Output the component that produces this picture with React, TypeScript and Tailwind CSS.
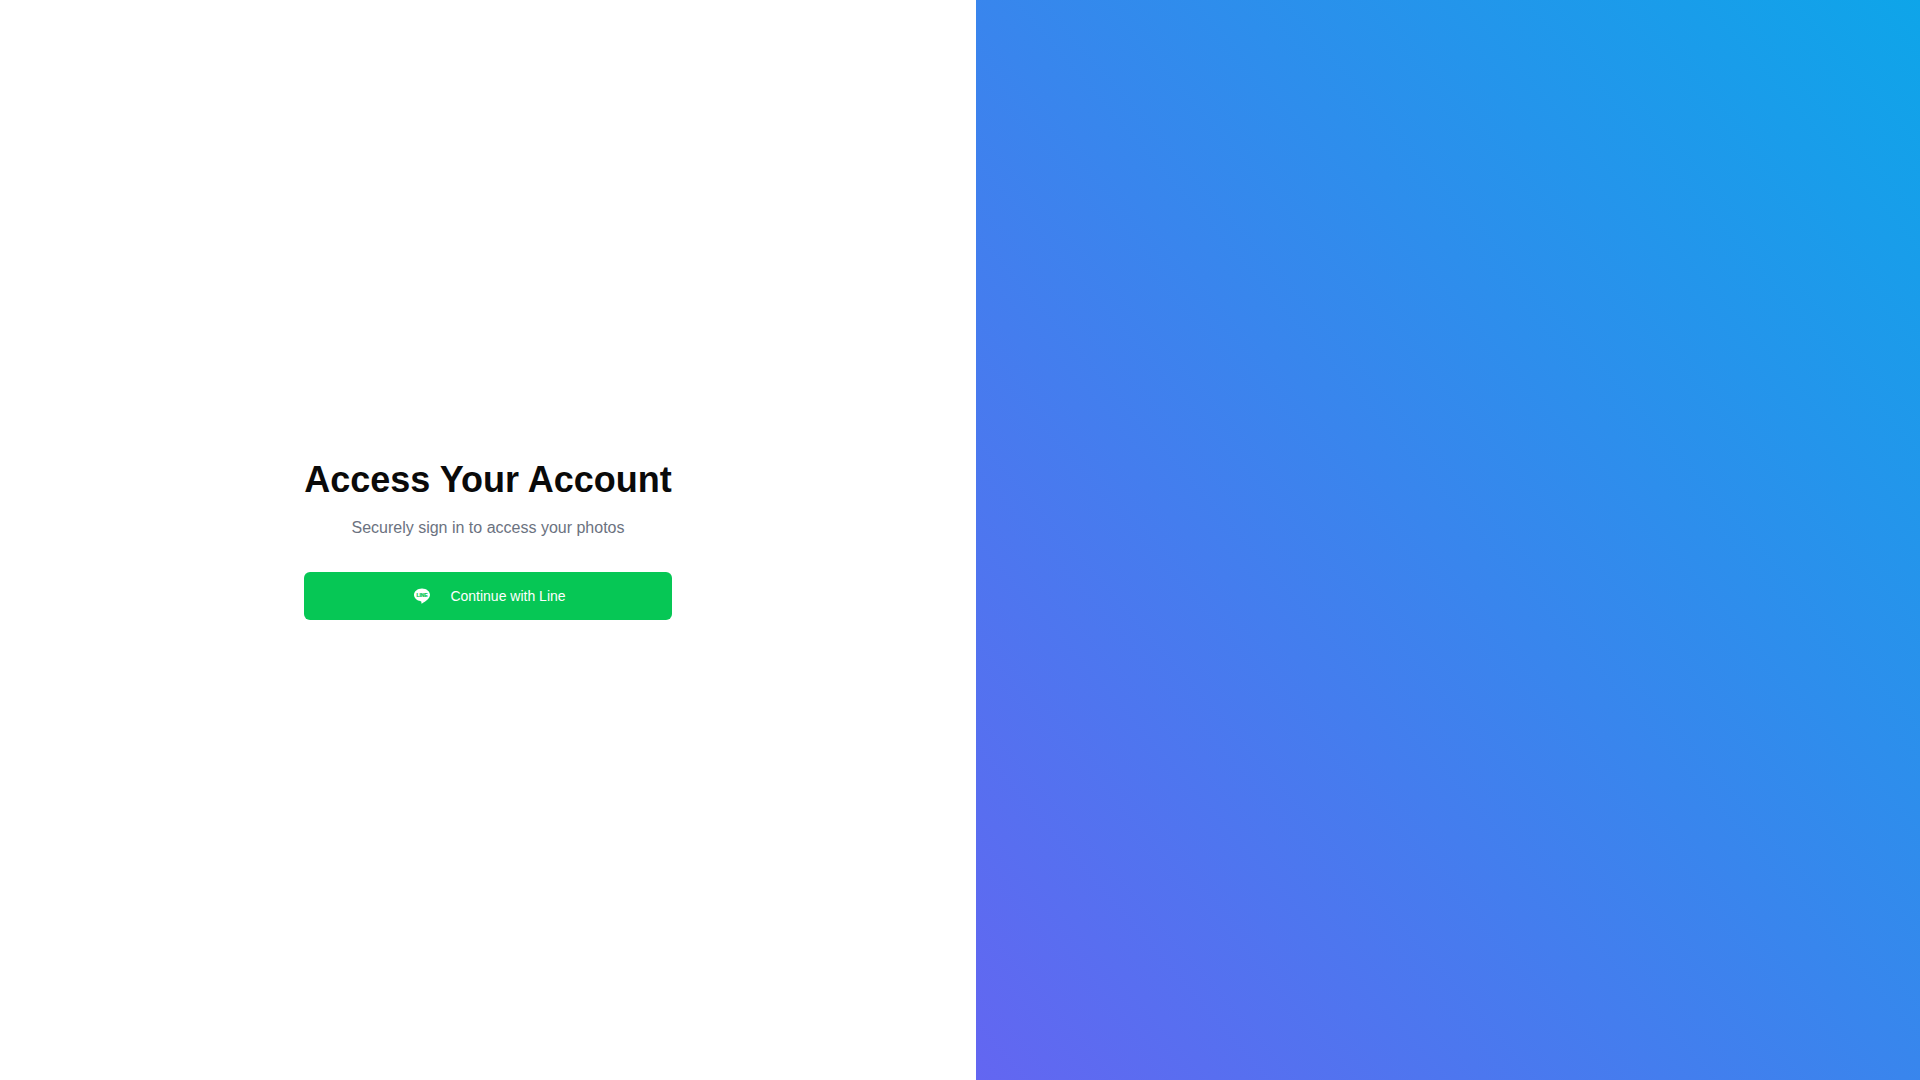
function LineIcon() {
  return (
    <svg viewBox="0 0 320 320" className="size-6" aria-hidden="true">
      <path
        fill="#fff"
        d="M266.7 144.92c0-47.74-47.86-86.58-106.7-86.58S53.33 97.18 53.33 144.92c0 42.8 38 78.65 89.24 85.43 3.48.75 8.21 2.29 9.4 5.26 1.08 2.7.71 6.93.35 9.65 0 0-1.25 7.53-1.52 9.13-.47 2.7-2.15 10.55 9.24 5.76s61.44-36.18 83.82-61.95c15.47-16.94 22.84-34.18 22.84-53.28Z"
      />
      <text
        x="160"
        y="171"
        textAnchor="middle"
        fontSize="66"
        fontWeight="700"
        fill="#06c755"
        stroke="#06c755"
        strokeWidth="3"
      >
        LINE
      </text>
    </svg>
  );
}

export default function App() {
  return (
    <main className="flex min-h-screen bg-white font-['Liberation_Sans',Arial,sans-serif]">
      <section className="flex flex-1 flex-col items-center justify-center p-4">
        <div className="flex flex-col">
          <div className="space-y-4 text-center">
            <h1 className="text-4xl font-bold text-[#0a0a0a]">Access Your Account</h1>
            <p className="text-base text-[#6b7280]">Securely sign in to access your photos</p>
          </div>
          <button
            type="button"
            className="mt-8 flex h-12 w-full cursor-pointer items-center justify-center gap-4 rounded-md bg-[#06c755] px-4 text-sm text-white transition hover:bg-[#05b34c]"
          >
            <LineIcon />
            Continue with Line
          </button>
        </div>
      </section>
      <div className="flex-1 bg-linear-to-tr/srgb from-[#6366f1] to-[#0ea5e9]" />
    </main>
  );
}
